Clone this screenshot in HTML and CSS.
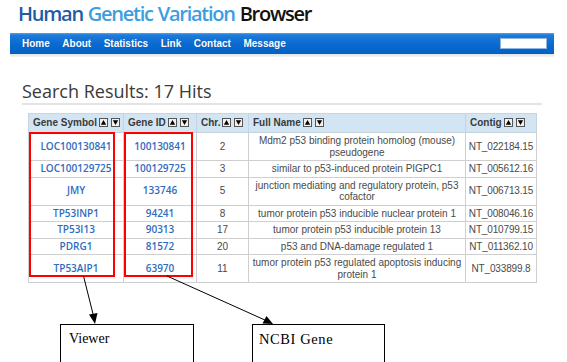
FILE: index.html
```html
<!DOCTYPE html>
<html lang="en">
<head>
<meta charset="utf-8">
<title>Human Genetic Variation Browser</title>
<link rel="stylesheet" href="styles.css">
</head>
<body>
<div class="page">
  <header class="masthead">
    <h1 class="site-title"><span class="t-human">Human</span> <span class="t-gv">Genetic Variation</span> <span class="t-browser">Browser</span></h1>
    <nav class="navbar">
      <a class="nav-link" href="#">Home</a>
      <a class="nav-link" href="#">About</a>
      <a class="nav-link" href="#">Statistics</a>
      <a class="nav-link" href="#">Link</a>
      <a class="nav-link" href="#">Contact</a>
      <a class="nav-link" href="#">Message</a>
      <input class="nav-search" type="text" aria-label="Search">
    </nav>
    <div class="nav-rule"></div>
  </header>

  <main class="content">
    <h2 class="results-title">Search Results: 17 Hits</h2>
    <div class="results">
      <table class="results-table">
        <colgroup>
          <col class="c-symbol"><col class="c-id"><col class="c-chr"><col class="c-name"><col class="c-contig">
        </colgroup>
        <thead>
          <tr>
            <th>Gene Symbol<span class="sorts"><svg class="sort" viewBox="0 0 9 9"><rect x=".5" y=".5" width="8" height="8"/><path d="M1.8 6.8 4.5 1.9 7.2 6.8Z"/></svg><svg class="sort" viewBox="0 0 9 9"><rect x=".5" y=".5" width="8" height="8"/><path d="M1.8 2.2 4.5 7.1 7.2 2.2Z"/></svg></span></th>
            <th>Gene ID<span class="sorts"><svg class="sort" viewBox="0 0 9 9"><rect x=".5" y=".5" width="8" height="8"/><path d="M1.8 6.8 4.5 1.9 7.2 6.8Z"/></svg><svg class="sort" viewBox="0 0 9 9"><rect x=".5" y=".5" width="8" height="8"/><path d="M1.8 2.2 4.5 7.1 7.2 2.2Z"/></svg></span></th>
            <th>Chr.<span class="sorts"><svg class="sort" viewBox="0 0 9 9"><rect x=".5" y=".5" width="8" height="8"/><path d="M1.8 6.8 4.5 1.9 7.2 6.8Z"/></svg><svg class="sort" viewBox="0 0 9 9"><rect x=".5" y=".5" width="8" height="8"/><path d="M1.8 2.2 4.5 7.1 7.2 2.2Z"/></svg></span></th>
            <th>Full Name<span class="sorts"><svg class="sort" viewBox="0 0 9 9"><rect x=".5" y=".5" width="8" height="8"/><path d="M1.8 6.8 4.5 1.9 7.2 6.8Z"/></svg><svg class="sort" viewBox="0 0 9 9"><rect x=".5" y=".5" width="8" height="8"/><path d="M1.8 2.2 4.5 7.1 7.2 2.2Z"/></svg></span></th>
            <th>Contig<span class="sorts"><svg class="sort" viewBox="0 0 9 9"><rect x=".5" y=".5" width="8" height="8"/><path d="M1.8 6.8 4.5 1.9 7.2 6.8Z"/></svg><svg class="sort" viewBox="0 0 9 9"><rect x=".5" y=".5" width="8" height="8"/><path d="M1.8 2.2 4.5 7.1 7.2 2.2Z"/></svg></span></th>
          </tr>
        </thead>
        <tbody>
          <tr><td><a class="gene-link" href="#">LOC100130841</a></td><td><a class="gene-link" href="#">100130841</a></td><td>2</td><td>Mdm2 p53 binding protein homolog (mouse) pseudogene</td><td class="contig">NT_022184.15</td></tr>
          <tr><td><a class="gene-link" href="#">LOC100129725</a></td><td><a class="gene-link" href="#">100129725</a></td><td>3</td><td>similar to p53-induced protein PIGPC1</td><td class="contig">NT_005612.16</td></tr>
          <tr><td><a class="gene-link" href="#">JMY</a></td><td><a class="gene-link" href="#">133746</a></td><td>5</td><td>junction mediating and regulatory protein, p53 cofactor</td><td class="contig">NT_006713.15</td></tr>
          <tr><td><a class="gene-link" href="#">TP53INP1</a></td><td><a class="gene-link" href="#">94241</a></td><td>8</td><td>tumor protein p53 inducible nuclear protein 1</td><td class="contig">NT_008046.16</td></tr>
          <tr><td><a class="gene-link" href="#">TP53I13</a></td><td><a class="gene-link" href="#">90313</a></td><td>17</td><td>tumor protein p53 inducible protein 13</td><td class="contig">NT_010799.15</td></tr>
          <tr><td><a class="gene-link" href="#">PDRG1</a></td><td><a class="gene-link" href="#">81572</a></td><td>20</td><td>p53 and DNA-damage regulated 1</td><td class="contig">NT_011362.10</td></tr>
          <tr><td><a class="gene-link" href="#">TP53AIP1</a></td><td><a class="gene-link" href="#">63970</a></td><td>11</td><td>tumor protein p53 regulated apoptosis inducing protein 1</td><td class="contig">NT_033899.8</td></tr>
        </tbody>
      </table>
      <div class="highlight hl-symbol"></div>
      <div class="highlight hl-geneid"></div>
    </div>
  </main>
</div>

<div class="annotations">
  <svg class="arrows" width="567" height="362" viewBox="0 0 567 362">
    <line x1="83.5" y1="276" x2="93.5" y2="316"/>
    <polygon points="95,324 89,314.5 97.5,313"/>
    <line x1="167" y1="276" x2="266" y2="320.5"/>
    <polygon points="273,324 262.5,323.5 266.5,316"/>
  </svg>
  <div class="callout callout-viewer">Viewer</div>
  <div class="callout callout-ncbi">NCBI Gene</div>
</div>
</body>
</html>
```

FILE: styles.css
```css
html {
  overflow: hidden;
}

body {
  margin: 0;
  background: #ffffff;
  font-family: "Liberation Sans", Arial, sans-serif;
  color: #333333;
}

.page {
  width: 544px;
  margin-left: 10px;
}

/* ---------- masthead ---------- */
.site-title {
  margin: 0;
  height: 33px;
  padding-left: 8px;
  font-family: "Open Sans", "Liberation Sans", sans-serif;
  font-weight: 600;
  font-size: 20px;
  line-height: 28px;
  letter-spacing: -1.25px;
  word-spacing: 1px;
  white-space: nowrap;
}

.t-human { color: #1f5ba6; }
.t-gv { color: #3c9edf; }
.t-browser { color: #111111; }

.navbar {
  display: flex;
  align-items: center;
  gap: 12.5px;
  height: 21px;
  padding-left: 12px;
  padding-right: 7px;
  background: linear-gradient(to bottom, #56a3ea 0, #1f7bdb 2px, #0b6bd1 50%, #0060c5 100%);
}

.nav-link {
  color: #ffffff;
  font-weight: 700;
  font-size: 10px;
  text-decoration: none;
  text-shadow: 0 0 1px rgba(0, 40, 100, 0.4);
}

.nav-search {
  margin: 0 0 0 auto;
  width: 47px;
  height: 11px;
  padding: 0;
  box-sizing: border-box;
  border: 1px solid #8fb6e0;
  background: #ffffff;
}

.nav-rule {
  height: 3px;
  background: linear-gradient(to bottom, #e2e2e2, #f4f4f4);
}

/* ---------- content ---------- */
.content {
  padding-left: 12px;
}

.results-title {
  margin: 23px 0 0;
  width: 520px;
  font-family: "Open Sans", "Liberation Sans", sans-serif;
  font-weight: 400;
  font-size: 18px;
  line-height: 23px;
  color: #3a3a3a;
  border-bottom: 2px solid #e4e4e4;
}

.results {
  position: relative;
  width: 508px;
  margin: 8px 0 0 6px;
}

.results-table {
  width: 508px;
  table-layout: fixed;
  border-collapse: collapse;
  font-size: 10px;
  color: #444444;
}

.c-symbol { width: 95px; }
.c-id { width: 73px; }
.c-chr { width: 52px; }
.c-name { width: 217px; }
.c-contig { width: 71px; }

.results-table th {
  background: #d3e5f2;
  border: 1px solid #c3d3df;
  border-top-color: #c8d6e0;
  padding: 3px 2px 3px 4px;
  text-align: left;
  font-weight: 700;
  line-height: 12px;
  color: #3a3a3a;
  white-space: nowrap;
  overflow: hidden;
}

.sorts {
  display: inline-flex;
  gap: 3px;
  margin-left: 2px;
  vertical-align: -1px;
}

.sort {
  display: block;
  width: 9px;
  height: 9px;
}

.sort rect {
  fill: #f1f1f1;
  stroke: #555555;
  stroke-width: 1;
}

.sort path {
  fill: #000000;
}

.results-table td {
  border: 1px solid #cfcfcf;
  padding: 2px 3px;
  line-height: 11.5px;
  text-align: center;
  vertical-align: middle;
  color: #4a4a4a;
}

.results-table td.contig {
  padding-left: 0;
  padding-right: 0;
  letter-spacing: -0.15px;
  white-space: nowrap;
}

.gene-link {
  font-family: "Open Sans", "Liberation Sans", sans-serif;
  color: #2f6cc0;
  font-weight: 600;
  font-size: 10px;
  text-decoration: none;
}

.highlight {
  position: absolute;
  top: 19px;
  height: 145px;
  box-sizing: border-box;
  border: 2px solid #ff0000;
}

.hl-symbol {
  left: 1px;
  width: 86px;
}

.hl-geneid {
  left: 96px;
  width: 69px;
}

/* ---------- annotations ---------- */
.annotations {
  position: absolute;
  left: 0;
  top: 0;
  width: 567px;
  height: 362px;
  pointer-events: none;
}

.arrows {
  position: absolute;
  left: 0;
  top: 0;
}

.arrows line {
  stroke: #000000;
  stroke-width: 1;
}

.arrows polygon {
  fill: #000000;
}

.callout {
  position: absolute;
  top: 324px;
  height: 50px;
  box-sizing: border-box;
  border: 1px solid #000000;
  background: #ffffff;
  padding: 5px 0 0 8px;
  font-family: "Liberation Serif", "Times New Roman", serif;
  font-size: 14px;
  line-height: 18px;
  color: #000000;
}

.callout-viewer {
  left: 60px;
  width: 134px;
}

.callout-ncbi {
  left: 252px;
  width: 133px;
  padding-left: 6px;
  font-size: 14.5px;
  letter-spacing: 0.6px;
}
```
